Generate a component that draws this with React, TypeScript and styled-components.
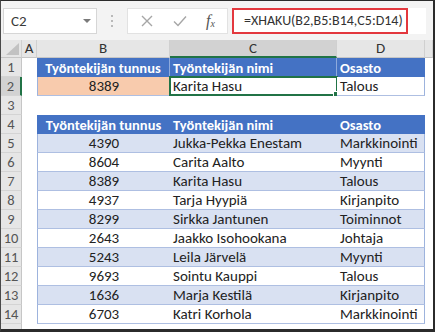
import styled, { createGlobalStyle } from 'styled-components';

const GlobalStyle = createGlobalStyle`
  html, body {
    margin: 0;
    padding: 0;
    background: #fff;
  }
  body {
    font-family: Carlito, Calibri, Lato, "Liberation Sans", sans-serif;
  }
`;

type Kind = 'blank' | 'head' | 'peach' | 'plain' | 'band' | 'white';

type SheetRow = {
  n: number,
  cells?: [string, string, string],
  kind?: 'head1' | 'input' | 'head2' | 'data',
  band?: boolean,
};

const data: [string, string, string][] = [
  ['4390', 'Jukka-Pekka Enestam', 'Markkinointi'],
  ['8604', 'Carita Aalto', 'Myynti'],
  ['8389', 'Karita Hasu', 'Talous'],
  ['4937', 'Tarja Hyypiä', 'Kirjanpito'],
  ['8299', 'Sirkka Jantunen', 'Toiminnot'],
  ['2643', 'Jaakko Isohookana', 'Johtaja'],
  ['5243', 'Leila Järvelä', 'Myynti'],
  ['9693', 'Sointu Kauppi', 'Talous'],
  ['1636', 'Marja Kestilä', 'Kirjanpito'],
  ['6703', 'Katri Korhola', 'Markkinointi'],
];

const rows: SheetRow[] = [
  { n: 1, kind: 'head1', cells: ['Työntekijän tunnus', 'Työntekijän nimi', 'Osasto'] },
  { n: 2, kind: 'input', cells: ['8389', 'Karita Hasu', 'Talous'] },
  { n: 3 },
  { n: 4, kind: 'head2', cells: ['Työntekijän tunnus', 'Työntekijän nimi', 'Osasto'] },
  ...data.map((cells, i) => ({ n: 5 + i, kind: 'data' as const, cells, band: i % 2 === 0 })),
];

export default function App() {
  return (
    <>
      <GlobalStyle />
      <Frame>
        <FormulaBar>
          <NameBox>
            C2
            <Caret />
          </NameBox>
          <Dots>
            <i />
            <i />
            <i />
          </Dots>
          <IconBox>
            <svg width="12" height="12" viewBox="0 0 12 12">
              <path d="M1 1 L11 11 M11 1 L1 11" stroke="#a6a6a6" strokeWidth="1.4" fill="none" />
            </svg>
            <svg width="14" height="12" viewBox="0 0 14 12">
              <path d="M1 6.5 L5 10.5 L13 1.5" stroke="#a6a6a6" strokeWidth="1.4" fill="none" />
            </svg>
            <Fx>
              f<sub>x</sub>
            </Fx>
          </IconBox>
          <FormulaBox>
            <Highlight>=XHAKU(B2,B5:B14,C5:D14)</Highlight>
          </FormulaBox>
        </FormulaBar>
        <Sheet>
          <Row>
            <Corner>
              <svg width="13" height="12" viewBox="0 0 13 12">
                <path d="M13 0 L13 12 L0 12 Z" fill="#c2c2c2" />
              </svg>
            </Corner>
            <ColHead>A</ColHead>
            <ColHead>B</ColHead>
            <ColHead selected>C</ColHead>
            <ColHead>D</ColHead>
            <ColHead />
          </Row>
          {rows.map((r) => (
            <Row key={r.n}>
              <RowHead selected={r.n === 2}>{r.n}</RowHead>
              <Cell kind="blank" />
              {renderCells(r)}
              <Cell kind="blank" />
            </Row>
          ))}
          <Row>
            <RowHead>15</RowHead>
          </Row>
        </Sheet>
      </Frame>
    </>
  );
}

function renderCells(r: SheetRow) {
  if (!r.cells) {
    return (
      <>
        <Cell kind="blank" />
        <Cell kind="blank" />
        <Cell kind="blank" />
      </>
    );
  }
  const [b, c, d] = r.cells;
  if (r.kind === 'head1') {
    return (
      <>
        <Cell kind="head" center sep>{b}</Cell>
        <Cell kind="head" sep>{c}</Cell>
        <Cell kind="head" edge>{d}</Cell>
      </>
    );
  }
  if (r.kind === 'input') {
    return (
      <>
        <Cell kind="peach" center boxed>{b}</Cell>
        <Cell kind="white" boxed>
          <Selection>
            {c}
            <Handle />
          </Selection>
        </Cell>
        <Cell kind="white" boxed edge>{d}</Cell>
      </>
    );
  }
  if (r.kind === 'head2') {
    return (
      <>
        <Cell kind="head" center>{b}</Cell>
        <Cell kind="head">{c}</Cell>
        <Cell kind="head" edge>{d}</Cell>
      </>
    );
  }
  const kind: Kind = r.band ? 'band' : 'plain';
  return (
    <>
      <Cell kind={kind} center lined first>{b}</Cell>
      <Cell kind={kind} lined>{c}</Cell>
      <Cell kind={kind} lined edge>{d}</Cell>
    </>
  );
}

const Frame = styled.div`
  width: 435px;
  height: 332px;
  box-sizing: border-box;
  border-top: 1px solid #2b2b2b;
  border-left: 1px solid #4a4a4a;
  border-right: 2px solid #2b2b2b;
  border-bottom: 3px solid #2b2b2b;
  display: flex;
  flex-direction: column;
  overflow: hidden;
  background: #fff;
`;

const FormulaBar = styled.div`
  height: 39px;
  flex: none;
  background: #f3f3f3;
  display: flex;
  align-items: center;
  padding: 0 7px 0 2px;
  box-sizing: border-box;
`;

const NameBox = styled.div`
  width: 94px;
  height: 26px;
  box-sizing: border-box;
  background: #fff;
  border: 1px solid #d6d6d6;
  display: flex;
  align-items: center;
  justify-content: space-between;
  padding: 0 5px 0 7px;
  font-size: 15px;
  color: #3a3a3a;
`;

const Caret = styled.span`
  width: 0;
  height: 0;
  border-left: 4px solid transparent;
  border-right: 4px solid transparent;
  border-top: 4px solid #7a7a7a;
`;

const Dots = styled.div`
  width: 30px;
  display: flex;
  flex-direction: column;
  align-items: center;
  gap: 3px;
  i {
    width: 2px;
    height: 2px;
    background: #b9b9b9;
  }
`;

const IconBox = styled.div`
  width: 101px;
  height: 26px;
  box-sizing: border-box;
  background: #fff;
  border: 1px solid #e2e2e2;
  display: flex;
  align-items: center;
  justify-content: space-between;
  padding: 0 12px 0 13px;
`;

const Fx = styled.span`
  font-family: "Liberation Serif", serif;
  font-style: italic;
  font-size: 16px;
  color: #555;
  sub {
    font-size: 10px;
    vertical-align: -1px;
  }
`;

const FormulaBox = styled.div`
  flex: 1;
  height: 26px;
  margin-left: 4px;
  background: #fff;
  display: flex;
  align-items: stretch;
`;

const Highlight = styled.div`
  width: 176px;
  box-sizing: border-box;
  border: 2px solid #e3383e;
  display: flex;
  align-items: center;
  padding-left: 10px;
  font-size: 14px;
  color: #333;
  white-space: nowrap;
`;

const Sheet = styled.div`
  flex: 1;
  display: flex;
  flex-direction: column;
`;

const Row = styled.div`
  display: grid;
  grid-template-columns: 21px 15px 133px 167px 88px 1fr;
  height: 19px;
  flex: none;
  &:first-child {
    height: 18px;
  }
`;

const Corner = styled.div`
  background: #e6e6e6;
  border-right: 1px solid #d0d0d0;
  border-bottom: 1px solid #c6c6c6;
  display: flex;
  align-items: flex-end;
  justify-content: flex-end;
  padding: 0 2px 2px 0;
`;

const ColHead = styled.div<{ selected?: boolean }>`
  background: ${(p) => (p.selected ? '#d2d2d2' : '#e6e6e6')};
  border-right: 1px solid #d0d0d0;
  border-bottom: ${(p) => (p.selected ? '2px solid #217346' : '1px solid #c6c6c6')};
  box-sizing: border-box;
  display: flex;
  align-items: center;
  justify-content: center;
  font-size: 15px;
  color: #333;
  line-height: 1;
`;

const RowHead = styled.div<{ selected?: boolean }>`
  background: ${(p) => (p.selected ? '#d2d2d2' : '#e6e6e6')};
  border-right: ${(p) => (p.selected ? '2px solid #217346' : '1px solid #c6c6c6')};
  border-bottom: 1px solid #d4d4d4;
  box-sizing: border-box;
  display: flex;
  align-items: center;
  justify-content: center;
  font-size: 14.5px;
  color: #555;
`;

const fills: Record<Kind, string> = {
  blank: '#fff',
  head: '#4472c4',
  peach: '#f8cbad',
  plain: '#fff',
  band: '#d9e1f2',
  white: '#fff',
};

const Cell = styled.div<{
  kind: Kind,
  center?: boolean,
  sep?: boolean,
  boxed?: boolean,
  lined?: boolean,
  first?: boolean,
  edge?: boolean,
}>`
  position: relative;
  box-sizing: border-box;
  background: ${(p) => fills[p.kind]};
  color: ${(p) => (p.kind === 'head' ? '#fff' : '#222')};
  font-weight: ${(p) => (p.kind === 'head' ? 700 : 400)};
  font-size: ${(p) => (p.kind === 'head' ? 14.5 : 15)}px;
  display: flex;
  align-items: center;
  justify-content: ${(p) => (p.center ? 'center' : 'flex-start')};
  padding-left: ${(p) => (p.center ? 0 : 3)}px;
  white-space: nowrap;
  border-right: ${(p) => (p.sep ? '1px solid #8eaadc' : p.edge && p.kind !== 'head' ? '1px solid #9db3dd' : 'none')};
  border-left: ${(p) => (p.first || (p.boxed && p.center) ? '1px solid #9db3dd' : 'none')};
  border-bottom: ${(p) => (p.lined || p.boxed ? '1px solid #aebfe2' : 'none')};
`;

const Selection = styled.div`
  position: absolute;
  inset: -1px -1px -1px -1px;
  border: 2px solid #217346;
  display: flex;
  align-items: center;
  padding-left: 2px;
`;

const Handle = styled.span`
  position: absolute;
  right: -4px;
  bottom: -4px;
  width: 5px;
  height: 5px;
  background: #217346;
  border: 1px solid #fff;
`;
